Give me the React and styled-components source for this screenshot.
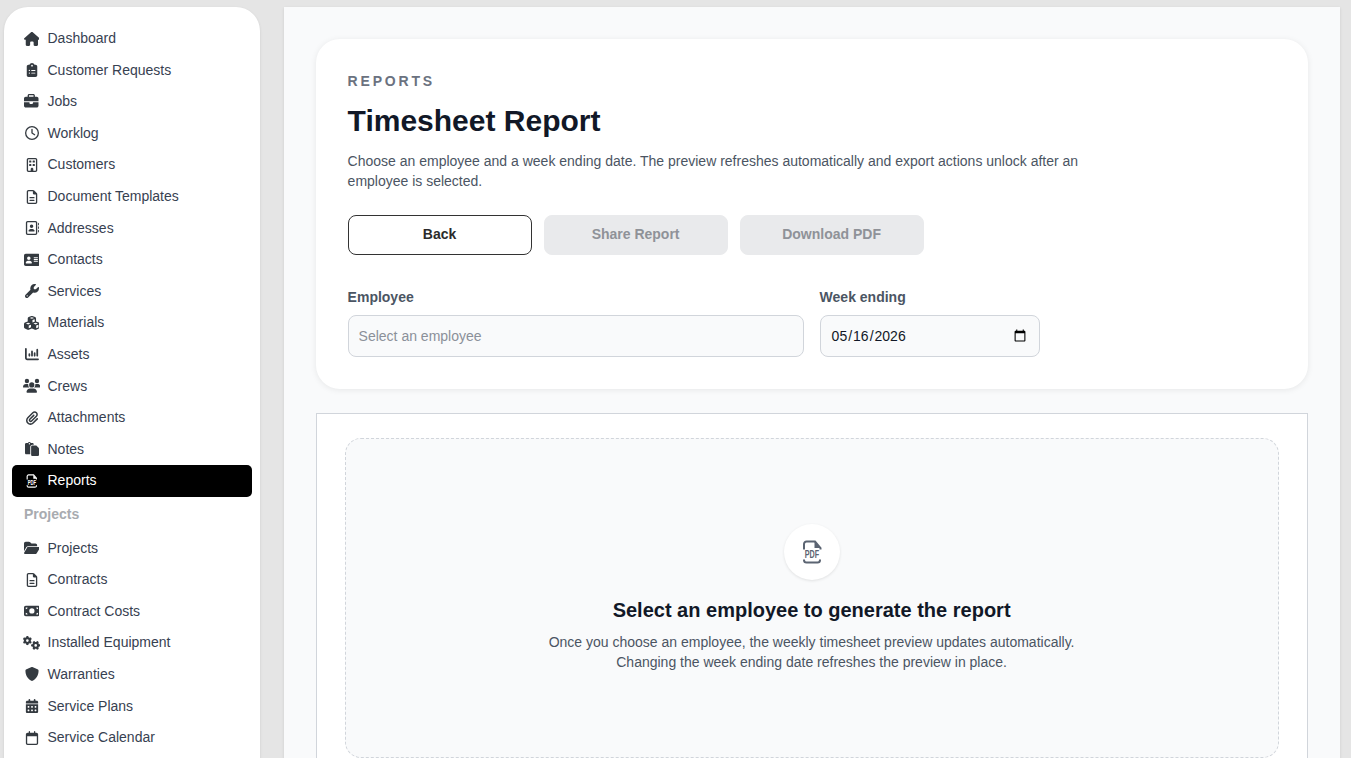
import React from 'react';
import styled, { createGlobalStyle } from 'styled-components';
import {
  FaHouse, FaClipboardList, FaBriefcase, FaRegClock, FaRegBuilding, FaRegFileLines,
  FaRegAddressBook, FaAddressCard, FaWrench, FaCubes, FaChartColumn, FaUsers,
  FaPaperclip, FaPaste, FaFolderOpen, FaMoneyBill, FaGears, FaShield, FaCalendarDays, FaRegCalendar,
} from 'react-icons/fa6';

const GlobalStyle = createGlobalStyle`
  html, body {
    margin: 0;
    height: 100%;
    overflow: hidden;
    background: #e5e5e5;
    font-family: "Liberation Sans", Arial, sans-serif;
  }
  * { box-sizing: border-box; }
`;

const Shell = styled.div`
  display: flex;
  gap: 24px;
  height: 758px;
  padding: 7px 11.4px 0 4px;
  overflow: hidden;
`;

const Sidebar = styled.aside`
  flex: 0 0 255.6px;
  height: 900px;
  padding: 15.6px 8px;
  background: #fff;
  border-radius: 24px;
  box-shadow: 0 1px 3px rgba(0, 0, 0, 0.1);
`;

const NavItem = styled.a`
  display: flex;
  align-items: center;
  height: 31.6px;
  padding: 0 0 0.7px 12px;
  border-radius: 5px;
  font-size: 14px;
  color: ${props => (props.$active ? '#fff' : '#374151')};
  background: ${props => (props.$active ? '#000' : 'transparent')};
`;

const NavIcon = styled.span`
  display: flex;
  justify-content: center;
  flex: 0 0 15px;
  min-width: 0;
  margin-right: 8.5px;
  padding-top: 1px;
  color: ${props => (props.$active ? '#fff' : '#343a40')};

  svg {
    flex: none;
  }
`;

const NavHeading = styled.div`
  display: flex;
  align-items: center;
  height: 35.6px;
  padding-left: 12px;
  font-size: 14px;
  font-weight: 700;
  color: #a8abb0;
`;

const Main = styled.main`
  flex: 1;
  height: 900px;
  padding: 32px;
  background: #f9fafb;
  box-shadow: 0 1px 3px rgba(0, 0, 0, 0.1);
`;

const HeaderCard = styled.section`
  height: 350px;
  padding: 32px;
  background: #fff;
  border-radius: 24px;
  box-shadow: 0 1px 6px rgba(0, 0, 0, 0.08);
`;

const Eyebrow = styled.div`
  font-size: 14px;
  line-height: 20px;
  font-weight: 700;
  letter-spacing: 0.2em;
  color: #6b7280;
`;

const Title = styled.h1`
  margin: 12px 0 12px;
  font-size: 30px;
  line-height: 36px;
  font-weight: 700;
  color: #111827;
`;

const Description = styled.p`
  margin: 0;
  max-width: 768px;
  font-size: 14px;
  line-height: 20px;
  color: #4b5563;
`;

const ButtonRow = styled.div`
  display: flex;
  gap: 12px;
  margin-top: 24px;
`;

const Button = styled.button`
  width: 184px;
  height: 40px;
  padding: 0 0 2px;
  border-radius: 8px;
  border: 1px solid ${props => (props.disabled ? '#e9eaec' : '#333')};
  background: ${props => (props.disabled ? '#e9eaec' : '#fff')};
  color: ${props => (props.disabled ? '#8f9298' : '#2b2b2b')};
  font: 700 14px "Liberation Sans", Arial, sans-serif;
`;

const FieldRow = styled.div`
  display: flex;
  gap: 16px;
  margin-top: 32px;
`;

const Field = styled.label`
  display: flex;
  flex-direction: column;
  width: ${props => props.$width}px;
`;

const FieldLabel = styled.span`
  margin-bottom: 8px;
  font-size: 14px;
  line-height: 20px;
  font-weight: 700;
  color: #4b5563;
`;

const Input = styled.input`
  width: 100%;
  height: 42px;
  padding: 0 10px;
  border: 1px solid #d1d5db;
  border-radius: 8px;
  background: #f9fafb;
  color: #111827;
  font: 14px "Liberation Sans", Arial, sans-serif;

  &::placeholder {
    color: #8b9099;
    opacity: 1;
  }
`;

const PreviewPanel = styled.section`
  margin-top: 24px;
  height: 500px;
  padding: 24px 28px;
  background: #fff;
  border: 1px solid #d1d5db;
`;

const EmptyState = styled.div`
  display: flex;
  flex-direction: column;
  align-items: center;
  justify-content: center;
  height: 320px;
  background: #f9fafb;
  border: 1px dashed #d1d5db;
  border-radius: 16px;
`;

const IconCircle = styled.div`
  display: flex;
  align-items: center;
  justify-content: center;
  width: 56px;
  height: 56px;
  border-radius: 50%;
  background: #fff;
  box-shadow: 0 1px 3px rgba(0, 0, 0, 0.1);
  color: #5b6472;
`;

const EmptyTitle = styled.h2`
  margin: 16px 0 8px;
  font-size: 20px;
  line-height: 28px;
  font-weight: 700;
  color: #111827;
`;

const EmptyText = styled.p`
  margin: 0;
  font-size: 14px;
  line-height: 20px;
  text-align: center;
  color: #4b5563;
`;

// page outline with folded corner, bottom bracket and the PDF label between them
function PdfIcon({ size = 24 }) {
  return (
    <svg viewBox="0 0 20 24" height={size} width={(size * 20) / 24} fill="none" stroke="currentColor" strokeWidth="2">
      <path d="M2 9.5V4a2.5 2.5 0 0 1 2.5-2.5H13L18.5 8v1.5" />
      <path d="M12.5 1.5V8h6z" fill="currentColor" stroke="none" />
      <path d="M2 19.5v.5a2.5 2.5 0 0 0 2.5 2.5h11A2.5 2.5 0 0 0 18 20v-.5" />
      <text
        transform="translate(10 18.3) scale(0.9 1.35)"
        textAnchor="middle"
        fill="currentColor"
        stroke="none"
        fontSize="8"
        fontWeight="700"
        fontFamily="Liberation Sans, Arial, sans-serif"
      >
        PDF
      </text>
    </svg>
  );
}

// size is the icon box: the wide Font Awesome glyphs need more than 14px to keep a 14px height
const mainNav = [
  ['Dashboard', FaHouse, 15.75],
  ['Customer Requests', FaClipboardList, 14],
  ['Jobs', FaBriefcase, 14.5],
  ['Worklog', FaRegClock, 14],
  ['Customers', FaRegBuilding, 14],
  ['Document Templates', FaRegFileLines, 14],
  ['Addresses', FaRegAddressBook, 14],
  ['Contacts', FaAddressCard, 15.75],
  ['Services', FaWrench, 14],
  ['Materials', FaCubes, 15.75],
  ['Assets', FaChartColumn, 14],
  ['Crews', FaUsers, 17.5],
  ['Attachments', FaPaperclip, 14],
  ['Notes', FaPaste, 14],
  ['Reports', PdfIcon, 14],
];

const projectNav = [
  ['Projects', FaFolderOpen, 15.75],
  ['Contracts', FaRegFileLines, 14],
  ['Contract Costs', FaMoneyBill, 15.75],
  ['Installed Equipment', FaGears, 17.5],
  ['Warranties', FaShield, 14],
  ['Service Plans', FaCalendarDays, 14],
  ['Service Calendar', FaRegCalendar, 14],
];

function NavLink({ label, icon: Icon, size }) {
  const active = label === 'Reports';
  return (
    <NavItem $active={active}>
      <NavIcon $active={active}><Icon size={size} /></NavIcon>
      {label}
    </NavItem>
  );
}

export default function App() {
  return (
    <>
      <GlobalStyle />
      <Shell>
        <Sidebar>
          {mainNav.map(([label, icon, size]) => <NavLink key={label} label={label} icon={icon} size={size} />)}
          <NavHeading>Projects</NavHeading>
          {projectNav.map(([label, icon, size]) => <NavLink key={label} label={label} icon={icon} size={size} />)}
        </Sidebar>
        <Main>
          <HeaderCard>
            <Eyebrow>REPORTS</Eyebrow>
            <Title>Timesheet Report</Title>
            <Description>
              Choose an employee and a week ending date. The preview refreshes automatically and export actions unlock after an employee is selected.
            </Description>
            <ButtonRow>
              <Button>Back</Button>
              <Button disabled>Share Report</Button>
              <Button disabled>Download PDF</Button>
            </ButtonRow>
            <FieldRow>
              <Field $width={456}>
                <FieldLabel>Employee</FieldLabel>
                <Input placeholder="Select an employee" readOnly />
              </Field>
              <Field $width={220}>
                <FieldLabel>Week ending</FieldLabel>
                <Input type="date" defaultValue="2026-05-16" />
              </Field>
            </FieldRow>
          </HeaderCard>
          <PreviewPanel>
            <EmptyState>
              <IconCircle><PdfIcon /></IconCircle>
              <EmptyTitle>Select an employee to generate the report</EmptyTitle>
              <EmptyText>
                Once you choose an employee, the weekly timesheet preview updates automatically.
                <br />
                Changing the week ending date refreshes the preview in place.
              </EmptyText>
            </EmptyState>
          </PreviewPanel>
        </Main>
      </Shell>
    </>
  );
}
